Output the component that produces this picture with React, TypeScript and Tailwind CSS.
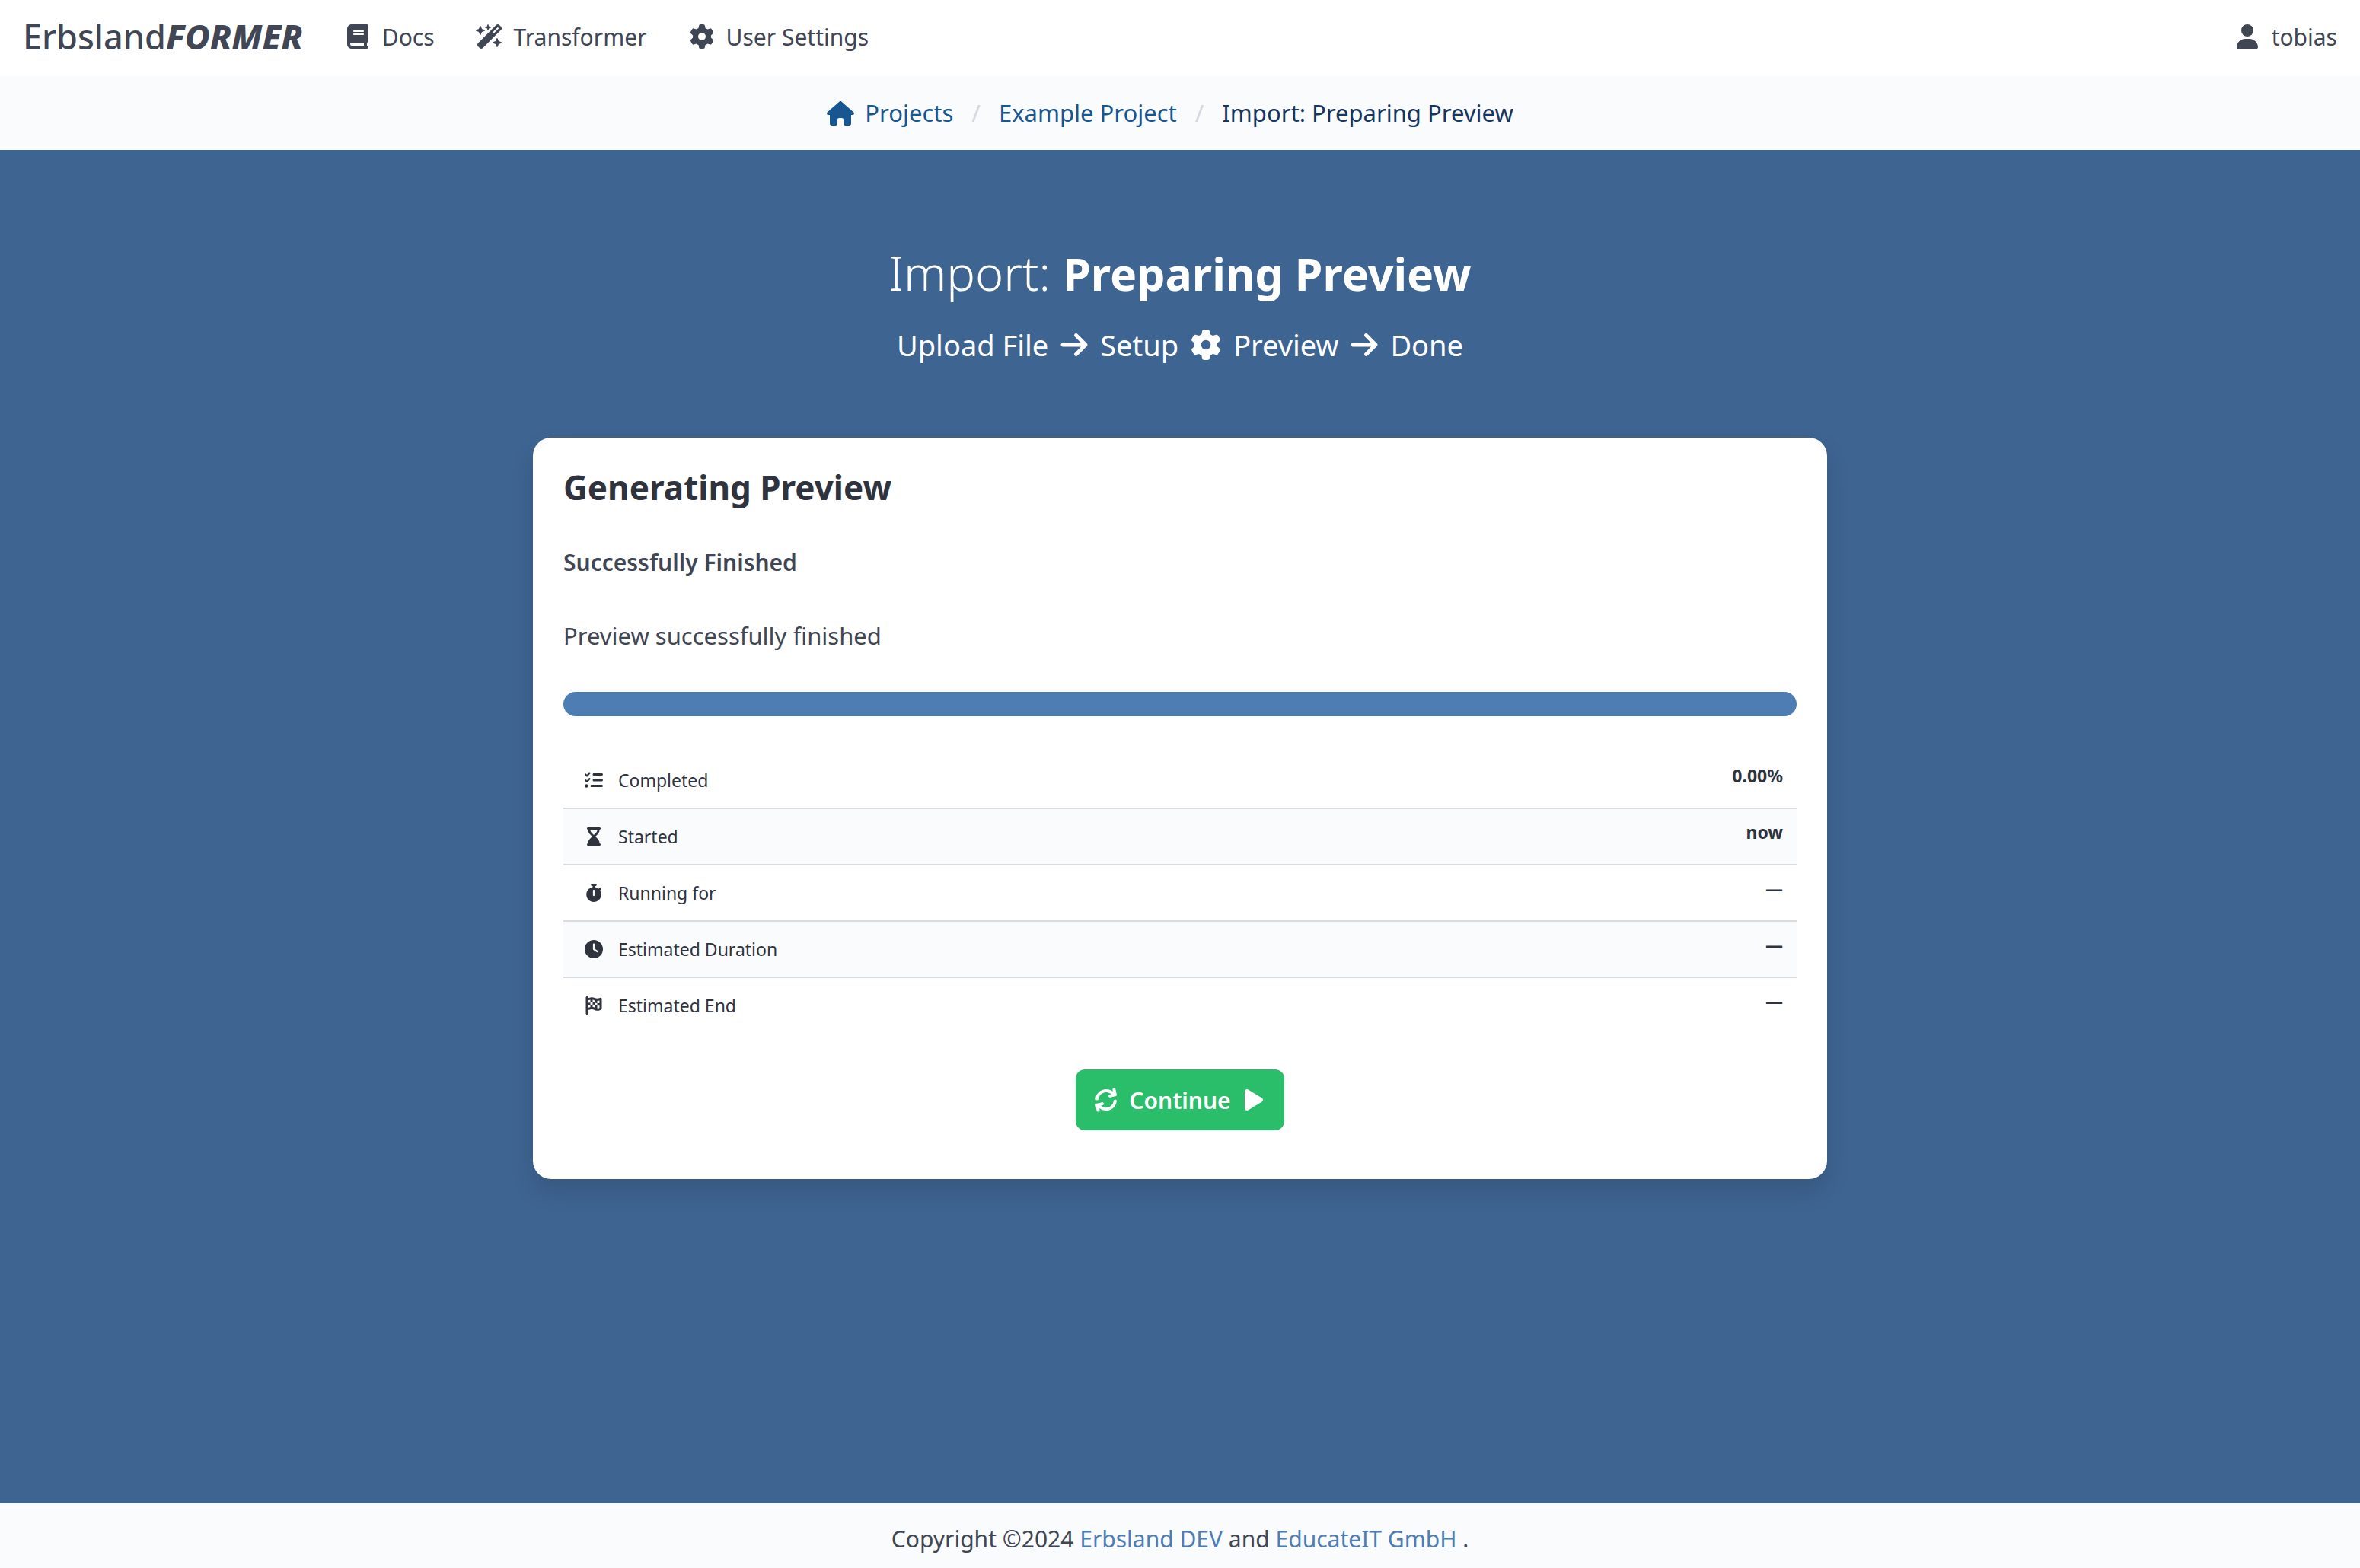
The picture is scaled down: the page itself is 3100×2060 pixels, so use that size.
import type { ReactNode } from 'react';
import {
  FaArrowRight,
  FaArrowsRotate,
  FaBook,
  FaClock,
  FaFlagCheckered,
  FaGear,
  FaHourglassEnd,
  FaHouse,
  FaListCheck,
  FaPlay,
  FaStopwatch,
  FaUser,
  FaWandMagicSparkles,
} from 'react-icons/fa6';

function IconBox({ children }: { children: ReactNode }) {
  return (
    <span aria-hidden="true" className="flex w-12 shrink-0 items-center justify-center">
      {children}
    </span>
  );
}

function NavItem({ icon, label }: { icon: ReactNode; label: string }) {
  return (
    <a href="#" className="flex items-center gap-2 px-6">
      <IconBox>{icon}</IconBox>
      {label}
    </a>
  );
}

function Navbar() {
  return (
    <nav aria-label="Main" className="flex h-[100px] items-center bg-white px-1.5 pb-1 text-[30px] text-[#404654]">
      <a href="#" className="px-6 text-[45px] leading-[60px] font-medium">
        Erbsland<span className="font-extrabold italic">FORMER</span>
      </a>
      <NavItem icon={<FaBook className="size-8" />} label="Docs" />
      <NavItem icon={<FaWandMagicSparkles className="h-8 w-9" />} label="Transformer" />
      <NavItem icon={<FaGear className="size-8" />} label="User Settings" />
      <div className="ml-auto">
        <NavItem icon={<FaUser className="size-8" />} label="tobias" />
      </div>
    </nav>
  );
}

function Slash() {
  return (
    <span aria-hidden="true" className="text-[#d5d8dc]">
      /
    </span>
  );
}

function Breadcrumb() {
  return (
    <nav aria-label="Breadcrumb" className="flex h-[97px] items-center justify-center bg-[#fafbfd] pr-8 text-[31px] text-[#175691]">
      <ol className="flex items-center">
        <li className="flex items-center">
          <a href="#" className="flex items-center gap-2 pr-6">
            <IconBox>
              <FaHouse className="h-8 w-9" />
            </IconBox>
            Projects
          </a>
        </li>
        <li className="flex items-center">
          <Slash />
          <a href="#" className="px-6">
            Example Project
          </a>
        </li>
        <li className="flex items-center">
          <Slash />
          <a href="#" aria-current="page" className="pl-6 text-[#16365f]">
            Import: Preparing Preview
          </a>
        </li>
      </ol>
    </nav>
  );
}

const stats = [
  { label: 'Completed', value: '0.00%', Icon: FaListCheck },
  { label: 'Started', value: 'now', Icon: FaHourglassEnd },
  { label: 'Running for', value: '—', Icon: FaStopwatch },
  { label: 'Estimated Duration', value: '—', Icon: FaClock },
  { label: 'Estimated End', value: '—', Icon: FaFlagCheckered },
];

function StatusTable() {
  return (
    <table className="mt-12 w-full text-[23px] leading-[36px] text-[#2e333d]">
      <tbody>
        {stats.map(({ label, value, Icon }) => (
          <tr key={label} className="border-b-2 border-[#d9dbde] last:border-b-0 even:bg-[#fafbfd]">
            <th scope="row" className="px-4 py-[18px] text-left font-normal">
              <span className="flex items-center gap-2">
                <IconBox>
                  <Icon className="size-6" />
                </IconBox>
                {label}
              </span>
            </th>
            <td className="px-[18px] pt-3 pb-6 text-right font-bold">{value}</td>
          </tr>
        ))}
      </tbody>
    </table>
  );
}

function PreviewCard() {
  return (
    <section className="mx-auto mt-24 w-full max-w-[1700px] rounded-3xl bg-white px-10 pt-10 pb-16 text-[#404654] shadow-[0_16px_32px_rgba(10,10,10,0.12)]">
      <h2 className="text-[44px] leading-[50px] font-bold text-[#2e333d]">Generating Preview</h2>
      <p className="mt-[50px] text-[30px] leading-[48px] font-semibold">Successfully Finished</p>
      <p className="mt-12 text-[31px] leading-[48px]">Preview successfully finished</p>
      <div role="progressbar" aria-label="Preview progress" aria-valuenow={100} className="mt-[50px] h-8 rounded-full bg-[#4e7db4]" />
      <StatusTable />
      <div className="mt-12 flex justify-center">
        <button type="button" className="flex h-20 items-center rounded-xl bg-[#2abd6a] px-4 text-[30px] font-semibold text-white">
          <IconBox>
            <FaArrowsRotate className="size-8 -rotate-12" />
          </IconBox>
          <span className="px-1.5">Continue</span>
          <IconBox>
            <FaPlay className="size-8" />
          </IconBox>
        </button>
      </div>
    </section>
  );
}

export default function App() {
  return (
    <div className="flex min-h-screen flex-col bg-[#3e6491] font-['Noto_Sans',sans-serif]">
      <header>
        <Navbar />
        <Breadcrumb />
      </header>
      <main className="grow px-10 pt-[125px] pb-20">
        <h1 className="text-center text-[63px] leading-[72px] font-light text-white">
          Import: <strong className="text-[59px] font-bold">Preparing Preview</strong>
        </h1>
        <p className="mt-8 flex items-center justify-center gap-4 text-[38px] leading-[52px] text-white">
          Upload File
          <FaArrowRight aria-hidden="true" className="h-10 w-9" />
          Setup
          <FaGear aria-hidden="true" className="size-10" />
          Preview
          <FaArrowRight aria-hidden="true" className="h-10 w-9" />
          Done
        </p>
        <PreviewCard />
      </main>
      <footer className="flex h-[85px] items-center justify-center bg-[#fafbfd] pt-2 text-[30px] text-[#404654]">
        <p>
          Copyright ©2024{' '}
          <a href="#" className="text-[#4e7db4]">
            Erbsland DEV
          </a>{' '}
          and{' '}
          <a href="#" className="text-[#4e7db4]">
            EducateIT GmbH
          </a>{' '}
          .
        </p>
      </footer>
    </div>
  );
}
